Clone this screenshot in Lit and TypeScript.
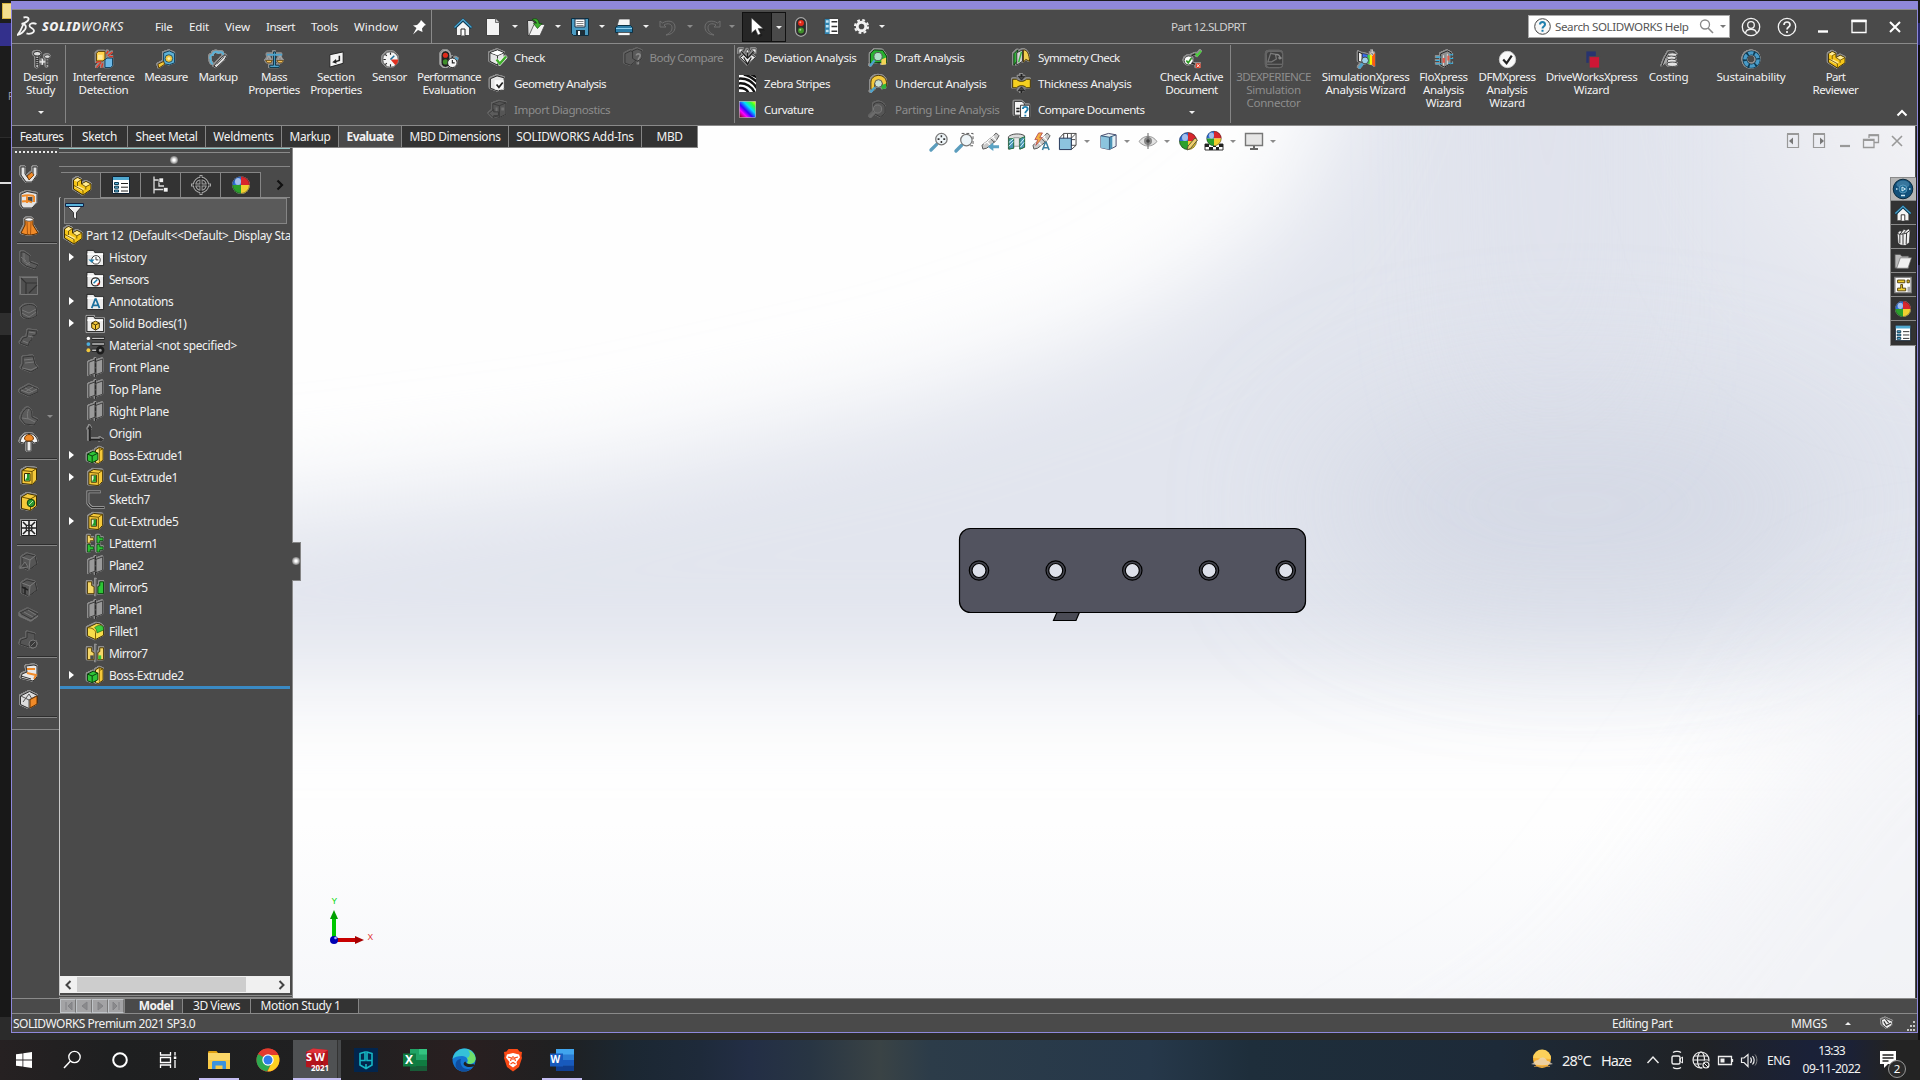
import { LitElement, html, svg, css, nothing } from "lit";
import type { SVGTemplateResult } from "lit";
import { customElement } from "lit/decorators.js";

const partBody = svg`<path d="M1.500 4 5.500 1.500 9.500 3.500V8l4.500-2.500 5 2.500v5.500l-8 5.500-9.500-6z" fill="#f5c518" stroke="#3d2d00"/><path d="m2 4.300 3.500-2.200L9 3.800 5.500 6zM9.500 8.300 14 6l4.300 2.200-4.500 2.600zM2.500 11l3-1.500 7 3.500-3 2z" fill="#ffeb94"/><path d="M5.500 6v4M5.500 6l4-2.300M9.500 8l4.300 2.800v2.700M13.800 10.800l4.700-2.500M11 19v-4.500l-9-5" fill="none" stroke="#6b5000" stroke-width=".9"/>`;
const listPanel = svg`<path d="M1.500 1.500h17v17h-17z" fill="#fff" stroke="#123"/><path d="M2 2h16v3H2z" fill="#4fa8d0"/><path d="M3.500 7.500h4v2h-4zM3.500 11.200h4v2h-4zM3.500 15h4v2h-4z" fill="#5ab4dc" stroke="#0d3a52"/><path d="M10 8.500h7M10 12.200h7M10 16h7" stroke="#222"/>`;
const ball = svg`<circle cx="10" cy="10" r="8.800" fill="#fff"/><path d="M10 10V1.200A8.800 8.800 0 0 0 1.200 10z" fill="#2f6fd6"/><path d="M10 10h8.800A8.800 8.800 0 0 0 10 1.200z" fill="#d8262c"/><path d="M10 10v8.800A8.800 8.800 0 0 1 1.200 10z" fill="#2ca02c"/><path d="M10 10v8.800A8.800 8.800 0 0 0 18.800 10z" fill="#f0cf30"/><circle cx="10" cy="10" r="8.500" fill="none" stroke="#222" stroke-opacity=".5"/><ellipse cx="7" cy="6.500" rx="3" ry="3.500" fill="#fff" opacity=".55"/>`;
const home = svg`<path d="M3.500 10 10 4l6.500 6v8.500h-13z" fill="#f4f4f4" stroke="#333" stroke-width=".8"/><path d="M8 18.500V12h4v6.500" fill="#fff" stroke="#222"/><path d="M1.500 11 10 3l8.500 8" fill="none" stroke="#0d3b54" stroke-width="3"/><path d="M1.500 10.500 10 2.500l8.500 8" fill="none" stroke="#4da3cc" stroke-width="1.400"/>`;
const folder = svg`<path d="M1 2.500h7l1.500 2.500h9v13.500H1z" fill="#ececec" stroke="#222"/><path d="M1.500 6.500h16.500" stroke="#fff" stroke-width="1.800"/>`;
const plane = svg`<path d="m3 4.500 6.500-2.500v14L3 18.500zM10.500 3.500 17.500 1v14l-7 2.500z" fill="#9a9a9a" stroke="#2e2e2e" stroke-width=".9"/><path d="M10 0v20" stroke="#2c2c2c" stroke-width="1.200" stroke-dasharray="4 1.500"/>`;
const extrude = svg`<path d="m10 4 4-2.500 4 1.500v12l-5 3.500-3-1z" fill="#f5c93a" stroke="#3d2d00"/><path d="m11 4.500 3-2v13l-3 2z" fill="#ffe58a"/><path d="M14 1.500v15M14.500 4.500l3.500-1.500" stroke="#7a5a00" fill="none"/><path d="m1.500 8.500 6-3 5 2v7l-6 3-5-2z" fill="#2fc437" stroke="#063b0a"/><path d="m1.500 8.500 5 2v7M6.500 10.500l6-3" fill="none" stroke="#063b0a"/>`;
const cut = svg`<path d="m3 4.500 5-3 9.500 1V14l-4 4.500-10.500-1z" fill="#f5c93a" stroke="#3d2d00"/><path d="m3 4.500 10 1 4.500-3M13 5.500v12.500" fill="none" stroke="#6b5000"/><path d="M5.500 7.500h5.500v7.500H5.500z" fill="#e8f7d0" stroke="#3d2d00"/><path d="M10.500 8v6.500H6l2-3V8z" fill="#1f9a2a"/>`;
const mirror = svg`<path d="M1.500 4v12.500h7V9L6 8V4z" fill="#f5d768" stroke="#4a3500"/><path d="M10 1v18" stroke="#ddd"/><path d="M10.500 1v18" stroke="#222"/>`;
const bolt = svg`<ellipse cx="5.500" cy="4" rx="4" ry="2.500" fill="#ddd" stroke="#222"/><path d="M4 6.500h3V18L5.500 19 4 18z" fill="#bbb" stroke="#222" stroke-width=".8"/><path d="M4 9h3M4 11h3M4 13h3M4 15h3" stroke="#222"/>`;
const cube = svg`<path d="m2 5 8-3 7 3v9l-7 4-8-4z" fill="#e6e6e6" stroke="#222"/><path d="m2 5 8 3 7-3M10 8v10" fill="none" stroke="#333"/><path d="m3 5 7-2.500 6 2.500-6 2.500z" fill="#fff"/>`;
const lens = svg`<path d="m1 19 6-6" stroke="#5b9dbd" stroke-width="3.500" stroke-linecap="round"/><circle cx="12" cy="7.500" r="6" fill="#eef5f8" stroke="#777" stroke-width="1.300"/>`;
const spyglass = svg`<path d="m1 14 11-9 4-4 3 3-3 5-10 8-4 1z" fill="#c9c9c9" stroke="#555"/><path d="m6 10 4 4M12 5l4 4M3 13l11-9" stroke="#fff" stroke-width="1.200"/><path d="m10 7 4 4" stroke="#555"/>`;
const dimCube = svg`<path d="m3 5 5-3 8 2 2 8-8 6-7-3z" fill="#555" stroke="#333"/><path d="m3 5 8 3 5-4M11 8l-1 10" fill="none" stroke="#7d7d7d"/>`;
const curl = svg`<path d="M2 4v6h6L6 8c4-2.500 8-1 8 2.500S12 16 8 18c6-.500 9-3.500 9-8C17 4 10 2.500 4.500 6z" fill="#4b4b4b" stroke="#6f6f6f"/>`;

const ICONS: Record<string, SVGTemplateResult> = {
  home, part: partBody, list: listPanel, ball, plane, extrude, cut,
  newdoc: svg`<path d="M3.500 1.500h9l4 4V18.500h-13z" fill="#f3f3f3" stroke="#2a2a2a" stroke-width=".8"/><path d="M12.500 1.500v4H16.500" fill="#ccc" stroke="#555" stroke-width=".8"/>`,
  open: svg`<path d="M1.500 3.500h5l1.500 2h5v13h-11z" fill="#ddd" stroke="#333"/><path d="m3 18.500 5-11h11l-5 11z" fill="#f3f3f3" stroke="#444" stroke-width=".8"/><path d="M6 2.500c4-2 7 0 7 4h3l-4.500 5L7.500 6.500h3c0-2-2-3-4.500-4z" fill="#3db02f" stroke="#0e4d08" stroke-width=".7"/>`,
  save: svg`<path d="M1.500 1.500h17v17h-15l-2-2z" fill="#4b9cc4" stroke="#0c2f42"/><path d="M5 2h10v8H5z" fill="#fff" stroke="#234"/><path d="M6.500 4.500h7M6.500 6.500h7M6.500 8.500h7" stroke="#777" stroke-width=".9"/><path d="M6 13h9v5.500H6z" fill="#1d2f39"/><path d="M8 14h2v4H8z" fill="#fff"/>`,
  print: svg`<path d="M5 2h11v7H3z" fill="#f4f4f4" stroke="#444" stroke-width=".7"/><path d="M1.500 10.500 4 8.500h12.500l2 2v5h-17z" fill="#2d7ca6" stroke="#0a3145"/><path d="M2 11.500h16" stroke="#8fd0ee"/><path d="M4 15.500h12v3H4z" fill="#f6f6f6" stroke="#444" stroke-width=".7"/>`,
  undo: curl,
  redo: svg`<g transform="matrix(-1 0 0 1 20 0)">${curl}</g>`,
  cursor: svg`<path d="M6 3v15l4-3.500 2.500 5.500 3-1.300L13 13.500h5z" fill="#1c1c1c"/><path d="M4.500 1v15L8.500 12.500l2.500 5.500 2.500-1.200L11 11.500h5z" fill="#fff" stroke="#444" stroke-width=".5"/>`,
  lights: svg`<rect x="4.500" y=".7" width="11" height="18.600" rx="5.500" fill="#2c2c2c" stroke="#aaa" stroke-width="1.200"/><circle cx="10" cy="6" r="3" fill="#e02a1a"/><circle cx="9.300" cy="5.200" r="1" fill="#ff9a8a"/><circle cx="10" cy="13.500" r="3" fill="#3f8f2a"/><circle cx="9.300" cy="12.700" r="1" fill="#a0d890"/>`,
  props: svg`<path d="M2.500 1.500h15v17h-15z" fill="#fff" stroke="#333"/><path d="M3 2h5v16H3z" fill="#2f83b0"/><path d="M4 3.500h3v2.500H4zM4 8.500h3V11H4zM4 13.500h3V16H4z" fill="#bfe4f5"/><path d="M10 5h6M10 10h6M10 15h6" stroke="#333" stroke-width="1.500"/>`,
  gear: svg`<circle cx="10" cy="10" r="5" fill="none" stroke="#f2f2f2" stroke-width="3.400"/><circle cx="10" cy="10" r="7.700" fill="none" stroke="#f2f2f2" stroke-width="2.400" stroke-dasharray="3.200 2.848"/>`,
  pin: svg`<path d="m12 3 5 5-1.500.5-2.500 3 .5 3.500L9 13l-5 4.500L7.500 11 4 8.500l4-.5 3-3z" fill="#fff"/>`,
  bolts: svg`${bolt}<g transform="translate(12 4) scale(.75)">${bolt}</g><path d="M8 12.500h6M11 9.500v6" stroke="#eee" stroke-width="1.300"/>`,
  interference: svg`<path d="m1.500 3.500 2-2h7v8l-2 2h-7z" fill="#ffd24a" stroke="#5a3c00"/><path d="M3 5h5v5H3z" fill="#ffe99a"/><path d="m10.500 10.500 2-2h6v8l-2 2h-6z" fill="#6cb8e6" stroke="#0c3c5a"/><path d="M14 1 12 4M18.500 2l-5 4M19 7h-4M1 13l5-1M1.500 18.500 6.500 13M7 18.500 8 14" stroke="#e6301c" stroke-width="1.400"/>`,
  measure: svg`<path d="m7 3 6-2 5.500 2.500v10L13 15.500l-6-1z" fill="#5db1d6" stroke="#0c3c5a"/><circle cx="12.500" cy="9" r="4" fill="#f3c93c" stroke="#1d4c66"/><circle cx="12.500" cy="9" r="1.500" fill="#fff1b0"/><path d="m1 15 6-3 1 3-6 4z" fill="#f3c93c" stroke="#5a3c00"/>`,
  markup: svg`<path d="M2 10c-2-3 0-5 2-5 0-3 4-4 6-2 3-2 5 0 5 2M2 10c-1 3 1 4 2 5" fill="none" stroke="#5db1d6" stroke-width="2"/><path d="m5 17 8-9 4-3 1.500 1.500-2 4-8.500 8z" fill="#ddd" stroke="#222"/><path d="m8 15 8-8" stroke="#555"/>`,
  scale: svg`<path d="M9 2h2v14h4v2.500H5V16h4z" fill="#4ea3cc" stroke="#0a3145"/><path d="M2 5h16" stroke="#4ea3cc" stroke-width="2"/><path d="M4 6 1.500 11h5zM16 6l-2.500 5h5z" fill="none" stroke="#aaa"/><path d="M.7 11h7L6 13.500H2.500zM12.500 11h7l-1.700 2.500h-3.500z" fill="#f3c060" stroke="#5a3c00" stroke-width=".8"/>`,
  section: svg`<path d="m3 5 14-3v12l-14 4z" fill="#f4f4f4" stroke="#222"/><path d="M13 6v5l-5 1.500" fill="none" stroke="#222" stroke-width="1.600"/><path d="M9.500 9.500 5.500 13l4.500 1.500z" fill="#222"/>`,
  sensor: svg`<circle cx="10" cy="10" r="8.200" fill="#f4f4f4" stroke="#555"/><path d="M10 10h8.200a8.200 8.200 0 0 1-3 6z" fill="#e03020"/><path d="m10 10 4-4" stroke="#1e6e9a" stroke-width="1.600"/><path d="M10 2.500v2.500M4.500 4.500l1.600 1.700M2.500 10H5M4.500 15.500l1.600-1.700M10 17.500V15" stroke="#222" stroke-width="1.200"/>`,
  perf: svg`<rect x="1" y=".7" width="9.500" height="17.600" rx="4.700" fill="#222" stroke="#ccc"/><circle cx="5.700" cy="5.500" r="2.700" fill="#e02a1a"/><circle cx="5.700" cy="12.500" r="2.700" fill="#3f8f2a"/><circle cx="13" cy="13.500" r="5" fill="#f4f4f4" stroke="#222"/><path d="M13 10.500v3h2.500M13 6.500v2" stroke="#222" stroke-width="1.200" fill="none"/><path d="m16 8 3 2" stroke="#4ea3cc" stroke-width="2"/>`,
  check: svg`${cube}<path d="m9 12 3.500 4L19 9" fill="none" stroke="#fff" stroke-width="4"/><path d="m9 12 3.500 4.500L19 9" fill="none" stroke="#3fae2a" stroke-width="2.600"/>`,
  geom: svg`<path d="m2.500 5 7-3 7.500 2v11l-6 3-8.500-3z" fill="#e6e6e6" stroke="#222"/><path d="M7 6.500h9.500v10H7z" fill="#fafafa"/><path d="m9 11 2.500 3 4-5" fill="none" stroke="#222" stroke-width="1.800"/>`,
  cubeoff: svg`<path d="m5 4 7-2.500 7 1.500v12l-7 3.500-7-2z" fill="#555" stroke="#3a3a3a"/><path d="m5 4 7 2 7-3M12 6v12" fill="none" stroke="#3a3a3a"/><path d="M8 8h2v4H8zM14 8h3v3h-3z" fill="#707070"/><path d="m1 14 5-4v2.500h5v4H6V19z" fill="#5c5c5c" stroke="#3a3a3a"/>`,
  compare: svg`<path d="m1 6 6-3 5 2v9l-5 4-6-2z" fill="#5a5a5a" stroke="#363636"/><path d="m9 3 5-2 5 2v8l-5 3-5-3z" fill="#5a5a5a" stroke="#363636"/><path d="M13 8c0-2.500 4-2.500 4 0s-2 2-2 4.500M15 15v2" fill="none" stroke="#8a8a8a" stroke-width="1.700"/>`,
  deviation: svg`<path d="m2.500 10 7.500 7.500L18.500 10l-4-3-4.500 4-4-4z" fill="#e9e9e9" stroke="#222"/><path d="m10 11-7-8M10 11l8-9M10 11V4M6 10l4 7 4-7" fill="none" stroke="#222" stroke-width="1.300"/><path d="M1 6V1h5zM19 6V1h-5zM8 5l2-4 2 4z" fill="#eee" stroke="#222" stroke-width=".6"/>`,
  zebra: svg`<svg x="1" y="1" width="18" height="18" viewBox="1 1 18 18" overflow="hidden"><path d="M1 1h18v18H1z" fill="#fff"/><g fill="none" stroke="#111" stroke-width="2.600"><path d="M0 15c6-1 10 2 11 5M0 10c8-1 15 3 18 10.500M0 5c9-1 16 4 20 10M6 .5c5 .5 9 3.500 14 8M13 0l8 4"/></g></svg>`,
  curvature: svg`<rect x="1.500" y="1.500" width="17" height="17" fill="url(#rb)" stroke="#ddd" stroke-width=".5"/>`,
  draft: svg`<path d="M1.500 16V6l4-4 9 .5 4 6V16l-5-1z" fill="#27b52f" stroke="#063b0a"/><path d="m13 12 5-2v7l-5 1z" fill="#f3d355"/><path d="m1 19 5-6" stroke="#4ea3cc" stroke-width="2.500"/><circle cx="9.500" cy="9" r="4.300" fill="#bfe6d8" fill-opacity=".9" stroke="#555"/>`,
  undercut: svg`<path d="M2 16V9c0-5 4-7.500 8-7.500 5 0 8 3 8.500 7.500V13H14v-3c-1-3-6-4-8 0v7z" fill="#f3c93c" stroke="#4a3500"/><path d="m12 12 6-2v5l-4 1z" fill="#2fb53a"/><path d="m1.500 19 5-5" stroke="#4ea3cc" stroke-width="2.500"/><circle cx="10" cy="10" r="4" fill="#cfe9dc" fill-opacity=".9" stroke="#555"/>`,
  parting: svg`<path d="M5 4c4-3 10-2 12 3v7l-5 4-7-4z" fill="#555" stroke="#383838"/><path d="m1 18 5-5" stroke="#6c6c6c" stroke-width="2.500"/><circle cx="9" cy="9.500" r="4.300" fill="#5f5f5f" stroke="#7a7a7a"/>`,
  symmetry: svg`<path d="m2 6 4-4v11l-4 5z" fill="#36b23d" stroke="#063b0a"/><path d="m5 5 6-3v12l-6 4z" fill="#d7d7d7" stroke="#333"/><path d="M7 15 10 4" stroke="#36b23d" stroke-width="1.500"/><path d="M12 2c4 0 6 4 6.500 12l-4-2-2.500 3z" fill="#f0cf50" stroke="#4a3500"/>`,
  thickness: svg`<path d="M.7 5.500h4c3 3 7.500 3 10.600 0h4v9h-4c-3-3-7.500-3-10.600 0h-4z" fill="#f5d020" stroke="#3d2d00"/><path d="M10 0v3M10 20v-3" stroke="#222" stroke-width="2"/><path d="M6.500 2.500h7l-3.500 4zM6.500 17.500h7l-3.500-4z" fill="#444" stroke="#111" stroke-width=".7"/>`,
  docs: svg`<path d="M2.500 1.500h8L13 4v12H2.500z" fill="#f5f5f5" stroke="#333"/><path d="M9 5.500h9.500v13H9z" fill="#fff" stroke="#333"/><path d="M4.500 12H8M4.500 9H8" stroke="#222" stroke-width="1.700"/><path d="M11.500 9.500c0-3 5-3 5 0 0 2-2.500 2-2.500 4.500M14 15.500v1.800" fill="none" stroke="#1e7fae" stroke-width="2"/>`,
  active: svg`<circle cx="6" cy="11" r="4.700" fill="#fff" stroke="#444"/><path d="m3.500 11 2 2.500 3.500-5" fill="none" stroke="#2c9a22" stroke-width="1.800"/><path d="m13 3.500 2 2.500 4-5" fill="none" stroke="#4ad03a" stroke-width="2"/><path d="m9 6 4-2M9 13.500l3.500 1.500" stroke="#222" stroke-width="1.500"/><path d="M13.500 14h5v5h-5z" fill="#e23a22"/><path d="m14.500 15 3 3M17.500 15l-3 3" stroke="#fff"/>`,
  threedx: svg`<rect x="1.500" y="1.500" width="17" height="17" rx="3" fill="#3f3f3f" stroke="#6c6c6c"/><path d="M2 15h16M3 12.500l3-9 5 1 1 5-5 3z" fill="none" stroke="#777" stroke-width="1.300"/><path d="M11 5c3-1 5 1 5 4l1.500-1M16 9l-2-1" fill="none" stroke="#888" stroke-width="1.600"/>`,
  simx: svg`<path d="m1.500 2 4 2v9l-4-1z" fill="#eee" stroke="#222"/><path d="m5.500 3.500 6 1.500v7l-6-1z" fill="#3a6cf0" stroke="#222" stroke-width=".6"/><path d="m11 5 3 .5v9h-3z" fill="#3fd04a"/><path d="m13.500 5 2.500-.5v11h-2.500z" fill="#fff200"/><path d="m16 4.500 3-1v14l-3-2z" fill="#ff5a10"/><path d="m2 19 4-5" stroke="#4ea3cc" stroke-width="3"/><circle cx="8.500" cy="11" r="3.600" fill="#9bd0e8" stroke="#444"/><path d="M16 0v4M14 3l2 3 2-3z" stroke="#ddd" fill="#222"/>`,
  flox: svg`<path d="m6 4 7-3 4 2v11l-7 4-4-2z" fill="#8f8f8f" stroke="#222"/><path d="M9 5.500v11M13 4v11" stroke="#ddd"/><path d="M8 8.500h2.500v5H8zM13 6h2v5h-2z" fill="#e05a4a"/><path d="M1 7.500h5M1 11h4M1 14.500h6M15 5h4M16 9h3M14 14h5" stroke="#2fb4e8" stroke-width="1.200"/>`,
  dfm: svg`<circle cx="10" cy="10" r="8.600" fill="#fafafa" stroke="#ccc"/><path d="m5.500 10 3.500 4 5.500-8" fill="none" stroke="#222" stroke-width="2.300"/>`,
  drive: svg`<path d="M3.500 1.500h10v12h-10z" fill="#28336f"/><path d="M6.500 7h11v12h-11z" fill="#cf1735" stroke="#4b4b4b"/>`,
  costing: svg`<path d="m2 17 3-8 4-7h6l-1 4" fill="#aaa" stroke="#222"/><g fill="#e2e2e2" stroke="#222" stroke-width=".8"><ellipse cx="13" cy="5" rx="5" ry="2"/><ellipse cx="12" cy="8.300" rx="5" ry="2"/><ellipse cx="12.500" cy="11.600" rx="5" ry="2"/><ellipse cx="13" cy="15" rx="5.500" ry="2.300"/></g>`,
  sustain: svg`<circle cx="10" cy="10" r="7" fill="none" stroke="#0e3a52" stroke-width="5"/><circle cx="10" cy="10" r="7" fill="none" stroke="#4a9cc8" stroke-width="3.600" stroke-dasharray="5.500 1.830"/>`,
  uturn: svg`<path d="M2 3v8l5 7h6l5-7V3h-4v7l-3 4H9l-3-4V3z" fill="#e4e4e4" stroke="#333"/><path d="m8 12 5-4 2 3-5 5z" fill="#f08a28" stroke="#5a2c00" stroke-width=".8"/><path d="M6 4v6M14 4v6" stroke="#888"/>`,
  weldcube: svg`<path d="m2 4 6-2.500 10 2v9L13 18H4l-2-3z" fill="#e4e4e4" stroke="#333"/><path d="M7.500 7h6v5h-6z" fill="#4a4a4a"/><path d="M3 6c4-1 8-1 12 0M8 5v8M15 6v6M3 11.500c4-1 7-1 10 1" stroke="#f08a28" stroke-width="2" fill="none"/>`,
  loft: svg`<path d="M6 3c2-1 6-1 8 0v6l5 8c-5 2.500-12 2.500-17 0l4-8z" fill="#f08a28" stroke="#5a2c00"/><ellipse cx="10" cy="3.500" rx="4" ry="1.700" fill="#fff" stroke="#444" stroke-width=".8"/><path d="m8 6 .5 12M12 6l-.5 12" stroke="#a85512"/>`,
  g1: svg`<path d="M2 2h3l6 4v6l8 3-3 4-9-3-5-4z" fill="#5b5b5b" stroke="#353535"/><path d="M5 3v8l6 4M2 7l5 4M11 12l-4 3" fill="none" stroke="#777"/>`,
  g2: svg`<path d="M1.500 1.500h17v17h-17z" fill="#505050" stroke="#777"/><path d="m2 2 5 5h11M7 7v11M10 17l8-8" fill="none" stroke="#333" stroke-width="1.200"/>`,
  g3: svg`<path d="M2 6c3-4 12-5 15-1l1 8c-3 4-12 5-15 1z" fill="#575757" stroke="#353535"/><path d="m3 8 7 3 7-4M3 11l7 4 7-5" fill="none" stroke="#777"/>`,
  g4: svg`<path d="m9 2 9 1-1 4-4 1v4l-2 1-2 5-8-3 3-5 4-1z" fill="#575757" stroke="#353535"/><path d="m10 4 6 1M4 13l5 2M9 8l5 1" stroke="#7a7a7a"/>`,
  g5: svg`<path d="m4 3 10-1 2 8 3 4-7 4-10-4 2-4z" fill="#575757" stroke="#353535"/><path d="m5 6 9-1M6 9l9-1M3 14l9 2 6-3" fill="none" stroke="#7a7a7a"/>`,
  g6: svg`<path d="m1 10 9-5 9 4v3l-9 4-9-4z" fill="#575757" stroke="#353535"/><path d="m2 10 8 3 8-4M6 8l8 4M14 7l-8 5" fill="none" stroke="#7a7a7a"/>`,
  g7: svg`<path d="M8 2c4 0 5 3 5 9l6 3-4 5-9-1-4-5c0-5 3-9 6-11z" fill="#5b5b5b" stroke="#353535"/><path d="m3 12 7 1 6 3M10 3c-2 3-2 6-1 10" fill="none" stroke="#7a7a7a"/>`,
  umbrella: svg`<path d="M8 9h4v10H8z" fill="#ececec" stroke="#444"/><path d="M1 10c1-5 4-8.500 9-8.500s8 3.500 9 8.500l-3.500 1-3-2h-5l-3 2z" fill="#f4f4f4" stroke="#333"/><path d="M5.500 7c0-6 9-6 9 0l-2 2h-5z" fill="#f08a28" stroke="#6b3400"/>`,
  hole: svg`<path d="m2.500 5 6-3.500 9 2v10.500l-6 4.500-9-2z" fill="#f5c93a" stroke="#3d2d00"/><path d="m2.500 5 9 2 6-3.500M11.500 7v11" fill="none" stroke="#6b5000"/><circle cx="12" cy="11" r="3.800" fill="#2a9a32" stroke="#0c3d10"/><path d="m10 13 4-4" stroke="#b5e8a8"/>`,
  expand: svg`<path d="M2.500 2.500h15v15h-15z" fill="#eee" stroke="#222"/><circle cx="10" cy="10" r="3" fill="none" stroke="#222" stroke-width="1.200"/><path d="M3 10h14M10 3v14M4 4l4 4M16 4l-4 4M4 16l4-4M16 16l-4-4" stroke="#222" stroke-width="1.600"/>`,
  g8: svg`${dimCube}<path d="m1 16 5-6 3 5z" fill="#444" stroke="#777"/>`,
  g9: svg`${dimCube}<path d="M6 9v7M3 9l6 3" stroke="#222" stroke-width="1.500"/>`,
  g10: svg`<path d="m1 9 8-4 10 5-7 5z" fill="#555" stroke="#353535"/><path d="m1 9v3l11 5 7-5M5 8l9 5M9 6l8 5" fill="none" stroke="#777"/>`,
  g11: svg`<path d="m8 2 8 2v7l-6 6-9-3 1-4 6-2z" fill="#555" stroke="#353535"/><circle cx="14" cy="14" r="4" fill="#3a3a3a" stroke="#777"/><path d="m12 16 4-4" stroke="#777"/>`,
  simplate: svg`<path d="m7 2 8-1 3 1v11l-4 4-12-3 1-4 5-2z" fill="#e8e8e8" stroke="#333"/><path d="m8 9 9 2-2 4M8 5l8 0" fill="none" stroke="#f08a28" stroke-width="1.800"/><path d="m2 12 10 3" stroke="#333"/>`,
  whitecube: svg`<path d="m1.500 6 9-4.500 8 4v8L10 18.500l-8.500-4z" fill="#ddd" stroke="#333"/><path d="m2 6 8 4 8-4.500M10 10v8M4 12l6-8 3 5" stroke="#555" fill="none"/><path d="m11 9.500 7-3.500v8l-7 4z" fill="#f08a28" stroke="#6b3400"/>`,
  tree: svg`<path d="M3 1.500v17M3 5h5M3 14.500h10M8 5v6h5" fill="none" stroke="#ddd" stroke-width="1.300"/><path d="M8 3h4.500v4.500H8zM12.500 12.500H17V17h-4.500z" fill="#f2f2f2" stroke="#222" stroke-width=".6"/>`,
  target: svg`<circle cx="10" cy="10" r="6.500" fill="none" stroke="#a8a8a8" stroke-width="3.400"/><path d="M10 0v20M0 10h20" stroke="#a8a8a8" stroke-width="3"/><circle cx="10" cy="10" r="6.500" fill="none" stroke="#222" stroke-width="1.300"/><path d="M10 1v18M1 10h18" stroke="#222" stroke-width="1.200"/>`,
  filter: svg`<path d="M1 4h17l-6.500 7.500v7l-3-2v-5z" fill="#eee" stroke="#333"/><path d="M.5 2.500h18v3H.5z" fill="#5ab4dc" stroke="#124"/>`,
  history: svg`${folder}<circle cx="10.500" cy="12.500" r="4.500" fill="#fff" stroke="#333"/><path d="M10.500 9.500v3h2.500" fill="none" stroke="#333"/><path d="m2.500 12 3.500 3.500 3-3.500z" fill="#1e7fae"/>`,
  sensors: svg`${folder}<circle cx="10" cy="12.500" r="4.300" fill="#fff" stroke="#222" stroke-width="1.300"/><path d="m8 14 4-4" stroke="#1e7fae" stroke-width="1.600"/><path d="m11 15.500 3-3v3z" fill="#e03020"/>`,
  annot: svg`${folder}<path d="m6 17 3.700-9.500h.8L14.200 17M7.500 14h5" fill="none" stroke="#1b6f9c" stroke-width="1.800"/>`,
  bodies: svg`<path d="M0 1.500h9v2.500h10.500v15.500H0z" fill="#4b4b4b" stroke="#aaa"/>${folder}<path d="m6 9.500 4-2 4 2v5l-4 2.500-4-2.500z" fill="#f5c93a" stroke="#3d2d00"/><path d="m6 9.500 4 2 4-2M10 11.500v5" fill="none" stroke="#3d2d00"/>`,
  material: svg`<circle cx="2.500" cy="2.500" r="1.800" fill="#fff"/><circle cx="2.500" cy="8.500" r="2" fill="#4db0e0"/><circle cx="2.500" cy="15" r="2" fill="#f3c93c"/><path d="M6 2.500h13.500M6 8.500h13.500M6 15h6" stroke="#222" stroke-width="3.400"/><path d="M6.500 2.500H19M6.500 8.500H19M6.500 15h6" stroke="#c0c0c0" stroke-width="1.500"/><circle cx="15" cy="15" r="3" fill="#999" stroke="#1c1c1c" stroke-width="2.800"/>`,
  origin: svg`<path d="M4 18V4M4 16.500h12" stroke="#222" stroke-width="2.200" fill="none"/><path d="M1.500 5.500 4 1l2.500 4.500zM14.500 14l4.500 2.500-4.500 2.500z" fill="#333"/>`,
  sketch: svg`<path d="M15.500 2H2v12c1.500 2 2 3 4.500 4.500h13" fill="none" stroke="#aaa" stroke-width="3"/><path d="M15 2H2v12c1.500 2 2 3 4.500 4.500H19" fill="none" stroke="#2e2e2e" stroke-width="1.200"/>`,
  pattern: svg`<path d="M1.500 1.500h3V4h3.500v3H4.500v2.500h-3z" fill="#f5d768" stroke="#4a3500" stroke-width=".8"/><g fill="#2fc437" stroke="#063b0a" stroke-width=".8"><path d="M11.500 1.500h3V4h3.500v3h-3.500v2.500h-3zM1.500 11h3v2.500h3.500v3H4.500V19h-3zM11.500 11h3v2.500h3.500v3h-3.500V19h-3z"/></g>`,
  mirror: svg`${mirror}<path d="M18.500 4v12.500h-6V9l2-1V4z" fill="#2fc437" stroke="#063b0a"/>`,
  mirror2: svg`${mirror}<path d="M18.500 4v12.500h-6V9l2-1V4z" fill="#f5d768" stroke="#4a3500"/><path d="M4.500 12h3.500v4H4.500z" fill="#4b4b4b"/><path d="M13 12h3v4h-3z" fill="#2fc437"/>`,
  fillet: svg`<path d="M1.500 6 11 1.500c4 0 7 2 7.500 5V14L10 18.500l-8.500-4z" fill="#f7dc4a" stroke="#3d2d00"/><path d="M10 18.500V11C10 8 6 6 1.500 6" fill="none" stroke="#7a5a00"/><path d="M9 6c2-2 5-3.500 9-1.500l.5 4-7 3C11.500 8.500 10.500 7 9 6z" fill="#3ccb40" stroke="#0b4a10" stroke-width=".6"/>`,
  zoomfit: svg`${lens}<path d="M12 3.500v2M12 9.500v2M8 7.500h2M14 7.500h2" stroke="#333" stroke-width="1.600"/>`,
  zoomarea: svg`<path d="M7 1.500h12v13H14" fill="none" stroke="#555" stroke-dasharray="3 2"/><g transform="translate(0 1)">${lens}</g>`,
  prev: svg`${spyglass}<path d="M19 14h-6v-3l-6 4.500 6 4.500v-3h6z" fill="#5ba3c4"/>`,
  sect: svg`<path d="M1.500 5c3-3.500 13-4 17-1v12l-5 2V8H7v9l-5.500 1z" fill="#ddd" stroke="#444"/><path d="M7 6h6v9H7z" fill="#e8e8e8" stroke="#777" stroke-width=".7"/><path d="M2 7h5v10l-5 1zM13.500 7l5-2v11l-5 2z" fill="#4b93b6" stroke="#274"/><path d="m2 11 5-4M2 15l5-5M14 12l4-5M14 16l4-5" stroke="#dff"/>`,
  dyn: svg`${spyglass}<path d="M7 1 3 8h3l-2 6 7-8H8l3-5z" fill="#f5b040" stroke="#b55"/><path d="m11 19 3-8h1l3 8M12 16.500h5" fill="none" stroke="#3a7f9f" stroke-width="1.600"/>`,
  orient: svg`<path d="M6 1.500h13V14H6zM1.500 6.500 6 1.500M14 6.500l5-5M14 18.500l5-4.500M10 2v13M6 8h12M14 2v12" fill="none" stroke="#444"/><path d="M1.500 6.500h12.500v12H1.500z" fill="#8cc4de" stroke="#235"/>`,
  display: svg`<path d="m2 4 8-2.500 8 1.500v12L11 18.500l-9-2z" fill="#e4f0f5" stroke="#446"/><path d="m2 4 9 1.500V18.500l-9-2z" fill="#8cc4de"/><path d="m11 5.500 3-1V17l-3 1.500z" fill="#4b93b6"/><path d="m2 4 9 1.500 7-2.500M11 5.500v13" fill="none" stroke="#357"/>`,
  eye: svg`<path d="M1 10.500c5-7 13-7 18 0-5 6-13 6-18 0z" fill="#e2e2e2" stroke="#999"/><circle cx="10" cy="10" r="4" fill="#888"/><path d="M10 2v16" stroke="#666"/><circle cx="10" cy="10" r="1.800" fill="#444"/>`,
  appear: svg`${ball}<path d="m9 19 1-4 7-8 2.500 2-7 8.500z" fill="#f0cf70" stroke="#553"/>`,
  scene: svg`<path d="M1 13h18v6H1z" fill="#fff" stroke="#333"/><path d="M1 13h4v3H1zM9 13h3v3H9zM15 13h4v3h-4zM5 16h4v3H5zM12 16h3v3h-3z" fill="#222"/><g transform="translate(1.500 -1) scale(.85)">${ball}</g>`,
  monitor: svg`<path d="M1.500 2.500h17v12h-17z" fill="#e6e6e6" stroke="#777" stroke-width="1.400"/><path d="M10 15v3M6 18h8" stroke="#666" stroke-width="2"/>`,
  dockl: svg`<path d="M4.500 3.500h11v13h-11z" fill="none" stroke="#999" stroke-width="1.200"/><path d="M4 3h12" stroke="#999" stroke-width="2"/><path d="m10 6.500-4 3.500 4 3.500z" fill="#777"/>`,
  dockr: svg`<path d="M4.500 3.500h11v13h-11z" fill="none" stroke="#999" stroke-width="1.200"/><path d="M4 3h12" stroke="#999" stroke-width="2"/><path d="m11 6.500 4 3.500-4 3.500z" fill="#777"/>`,
  vmin: svg`<path d="M5 15h10" stroke="#999" stroke-width="2.200"/>`,
  restore: svg`<path d="M8 7V4h9.500v7.500H13M2.500 8.500H13v8H2.500z" fill="none" stroke="#999" stroke-width="1.300"/><path d="M2.500 9H13M8 4.300h9.500" stroke="#999" stroke-width="2"/>`,
  vclose: svg`<path d="m5 5 10 10M15 5 5 15" stroke="#999" stroke-width="1.600"/>`,
  compass: svg`<circle cx="10" cy="10" r="9.800" fill="#12507a" stroke="#0a2a3e"/><ellipse cx="10" cy="5.500" rx="6.500" ry="4" fill="#5b9cc0" opacity=".5"/><circle cx="10" cy="10" r="4" fill="#1c6a96" stroke="#8cc4e0" stroke-width=".5"/><path d="m9 8 3.500 2L9 12z" fill="none" stroke="#cfe9f5"/><path d="M3 10h1.500M16 10h1.500M8 16.500h4" stroke="#cfe9f5" stroke-width="1.500"/>`,
  books: svg`<path d="m3.500 6 3-3 2.500 1 2-2.500 2.500 1L16 1l2 1.500-1 14-4.500 3-5-.5-3-2z" fill="#f0f0f0" stroke="#222" stroke-width=".7"/><path d="M6.500 7v10M10 6.500v12M14 5.500 13.500 18M3.500 6l3 1L9 4M7 7l3-.5L13.500 2.500M11 6.500l3-1 4-3" fill="none" stroke="#333" stroke-width="1.100"/>`,
  folderopen: svg`<path d="M1 2.500h6l1.500 2h8v13.500H1z" fill="#bbb" stroke="#444"/><path d="m3 18 4-11.500h12.500l-4 11.500z" fill="#f0f0f0" stroke="#666" stroke-width=".7"/>`,
  palette: svg`<path d="M1 1.500h18v17H1z" fill="#fafafa" stroke="#888" stroke-width="1.500"/><path d="M4 4.500h8v3H4zM14.500 4.500h2.500v3h-2.500zM7.500 9.500h2v4H13v3H4v-3h3.500z" fill="#f0cf30" stroke="#4a3500"/><path d="M15 12h3v5.500h-3z" fill="#aaa"/>`,
  tag: svg`<path d="m3 6 5-2 9 4-1 5-6 4-6-5z" fill="#eee" stroke="#333"/><path d="m6 8 3 5 6-3M8 5l4 5" fill="none" stroke="#333" stroke-width="1.400"/>`,
};

const TASK: Record<string, SVGTemplateResult> = {
  win: svg`<path d="m4 6.300 6.500-.9v6.200H4zM11.300 5.300 20 4v7.600h-8.700zM4 12.400h6.500v6.200L4 17.700zM11.300 12.400H20V20l-8.700-1.300z" fill="#fff"/>`,
  search: svg`<circle cx="14.500" cy="9" r="5.700" fill="none" stroke="#fff" stroke-width="1.300"/><path d="m10.500 13-6.500 7" stroke="#fff" stroke-width="1.500"/>`,
  ring: svg`<circle cx="12" cy="12" r="6.800" fill="none" stroke="#fff" stroke-width="2"/>`,
  view: svg`<path d="M4.500 4v3h10V4M4.500 20v-3h10v3M4.500 9.500h10v5h-10z" fill="none" stroke="#fff" stroke-width="1.300"/><path d="M19 4v3.500M19 12v8" stroke="#fff" stroke-width="1.300"/><path d="M17.800 8.500h2.500V11h-2.500z" fill="#fff"/>`,
  explorer: svg`<path d="M1 4.500c0-1 .5-1.500 1.500-1.500h7l1.500 2H1z" fill="#e0a010"/><path d="M1 5h22v16H1z" fill="#fbd667"/><path d="M1 12h22v9H1z" fill="#f8c945"/><path d="M5 21v-6.500c0-1 .7-1.500 1.500-1.500h11c1 0 1.500.5 1.500 1.500V21h-3.500v-3.500h-7V21z" fill="#3c92dd"/>`,
  chrome: svg`<circle cx="12" cy="12" r="11.500" fill="#e33b2e"/><path d="M12 12 2.200 6A11.500 11.500 0 0 0 11 23.500l5-9z" fill="#2da94f"/><path d="M12 12h5l-5.500 11.500A11.500 11.500 0 0 0 22.300 7H12z" fill="#fdd022"/><path d="M2.200 6A11.500 11.500 0 0 1 22.300 7H12z" fill="#e33b2e"/><circle cx="12" cy="12" r="5.700" fill="#fff"/><circle cx="12" cy="12" r="4.500" fill="#2f7de9"/>`,
  teal: svg`<path d="M0 0h24v24H0z" fill="#02254d"/><path d="M6 5.500 11 4v8.500H6zM18 5.500 13 4v8.500h5zM6 12.500V17l6 3.500 6-3.500v-4.500M12 16v4" fill="none" stroke="#16b6c4" stroke-width="1.600"/>`,
  excel: svg`<path d="M7 1h17v22H7z" fill="#21a366"/><path d="M16 1h8v5.500h-8z" fill="#33c481"/><path d="M7 12h17v6H7z" fill="#107c41"/><path d="M7 18h17v5H7z" fill="#185c37"/><path d="M0 5.500h13v13H0z" fill="#107c41"/>`,
  edge: svg`<circle cx="12" cy="12" r="11.500" fill="#1476d2"/><path d="M.6 11C2 4 7 .5 12.500.5 20 .5 24 6 23.500 11c-.4 4-5 6-8.500 4 2-3 0-7-5-7-4 0-8 1-9.400 3z" fill="#35c1d8"/><path d="M16 2c5 2 8 6 7.500 9.500-.5 4-5.500 5.500-8.500 3.500 1.500-2 1-4 0-5 3-1 4-5 1-8z" fill="#6fe06a"/><path d="M9 11c-2 5 2 11 8 10 2 0 3-1 4.500-2.500-4 5.500-12 6.500-17 2C2 15 5 11 9 11z" fill="#0f4ea0"/><path d="M13.500 13.500c0 2 3 3.500 8 2.500l1 2c-4 2-9 1-10.500-1-1-1.500 0-3 1.500-3.500z" fill="#20201f"/>`,
  brave: svg`<path d="M7.500 1h9l2 2.500L21 4l-.5 4 .5 2-3 9-6 4.500L6 19l-3-9 .5-2L3 4l2.500-.5z" fill="#fb4a16"/><path d="M6 6.500 12 5l6 1.500 1 3-3.500 4.500.5 2.500-4 3-4-3 .5-2.500L5 9.500z" fill="#fff"/><path d="m7 9 3.500 1L9.500 13M17 9l-3.500 1 1 3M9.500 16l2.500-1.500 2.500 1.500M12 8v4" fill="none" stroke="#fb4a16" stroke-width="1.200"/>`,
  word: svg`<path d="M6 1h18v22H6z" fill="#2b7cd3"/><path d="M6 1h18v5.500H6z" fill="#41a5ee"/><path d="M6 12h18v5.500H6z" fill="#185abd"/><path d="M6 17.500h18V23H6z" fill="#103f91"/><path d="M0 5.500h13v13H0z" fill="#185abd"/>`,
  sw: svg`<path d="m1 4 7-3.500L23 2v15l-6 4-16-2z" fill="#b3141c"/><path d="m1 4 7-3.500L23 2l-6 4z" fill="#e0333b"/><path d="M17 6v15" stroke="#7c0a10"/>`,
  sun: svg`<circle cx="12" cy="11" r="9" fill="#f9b233"/><path d="M3 10a9 9 0 0 1 18 1z" fill="#fcd05a"/><path d="M1 16c4-1 3-4 7-4 3-4 8-3 9 1 3 0 3 2 6 3-5 1.500-17 1.500-22 0z" fill="#ead9c4" opacity=".75"/><path d="M4 18.500h16" stroke="#cf9a50" opacity=".7"/>`,
  chev: svg`<path d="m6.500 15 5.500-6 5.500 6" fill="none" stroke="#eee" stroke-width="1.400"/>`,
  meet: svg`<path d="M8 4.500c2-1.500 6-1.500 8 0M8 19.500c2 1.500 6 1.500 8 0" fill="none" stroke="#eee" stroke-width="1.300"/><rect x="7" y="8" width="8" height="8" rx="1.500" fill="none" stroke="#eee" stroke-width="1.400"/><path d="m15 11 2.500-2v6L15 13z" fill="none" stroke="#eee"/>`,
  globe: svg`<g fill="none" stroke="#eee" stroke-width="1.200"><circle cx="12" cy="12" r="8"/><ellipse cx="12" cy="12" rx="3.500" ry="8"/><path d="M4 12h16M5 8h14M5 16h14"/></g><circle cx="17" cy="17" r="4.500" fill="#222"/><circle cx="17" cy="17" r="3" fill="none" stroke="#eee" stroke-width="1.200"/><path d="m15 15 4 4" stroke="#eee"/>`,
  battery: svg`<path d="M5.500 8.500h13v8h-13zM19.500 11v3" fill="none" stroke="#eee" stroke-width="1.300"/><path d="M7.500 10.500h4v4h-4z" fill="#eee"/>`,
  volume: svg`<path d="M4.500 10v4.500H7l4 4v-12L7 10z" fill="none" stroke="#eee" stroke-width="1.200"/><path d="M13.500 9.500c1 1.500 1 4 0 5.500M15.500 8c2 2.500 2 6 0 8.500" fill="none" stroke="#eee" stroke-width="1.200"/><path d="M18 6.500c2.500 3 2.500 8 0 11" fill="none" stroke="#888"/>`,
  notif: svg`<path d="M4 3h16v13h-8l-4 4v-4H4z" fill="#fff"/><path d="M6.500 7h11M6.500 10h11M6.500 13h6" stroke="#222" stroke-width="1.300"/>`,
};

const ic = (n: string, cls = "", size = 20) =>
  html`<svg class="ic ${cls}" width=${size} height=${size} viewBox="0 0 20 20">${ICONS[n]}</svg>`;
const tk = (n: string) => html`<svg class="ic" width="24" height="24" viewBox="0 0 24 24">${TASK[n]}</svg>`;
const t = (s: string, w: number) => html`<span class="t" data-w=${w}>${s}</span>`;
const cell = (w: number, c: unknown = nothing, cls = "") =>
  html`<div class="cell ${cls}" style="width:${w}px">${c}</div>`;
const arrow = (cls = "") => html`<i class="arrow ${cls}"></i>`;

type Line = [string, number];
const big = (w: number, icon: string, lines: Line[], opts: { off?: boolean; drop?: boolean } = {}) => html`
  <div class="big ${opts.off ? "off" : ""}" style="width:${w}px">
    ${ic(icon, ["drive", "dfm", "section"].includes(icon) ? "" : "halo", 19)}
    <div class="lines">${lines.map(([s, lw]) => html`<div>${t(s, lw)}</div>`)}</div>
    ${opts.drop ? arrow("below") : nothing}
  </div>`;
const col = (w: number, rows: [string, string, number, boolean?][]) => html`
  <div class="col" style="width:${w}px">
    ${rows.map(([i, s, lw, off]) => html`<div class="crow ${off ? "off" : ""}">${ic(i, i === "zebra" || i === "curvature" ? "" : "halo", 19)}${t(s, lw)}</div>`)}
  </div>`;

const TREE: [string, string, number, boolean][] = [
  ["history", "History", 37.5, true], ["sensors", "Sensors", 39.5, false], ["annot", "Annotations", 64.5, true],
  ["bodies", "Solid Bodies(1)", 77.5, true], ["material", "Material <not specified>", 128, false],
  ["plane", "Front Plane", 60, false], ["plane", "Top Plane", 52, false], ["plane", "Right Plane", 60, false],
  ["origin", "Origin", 32.5, false], ["extrude", "Boss-Extrude1", 74, true], ["cut", "Cut-Extrude1", 69, true],
  ["sketch", "Sketch7", 41, false], ["cut", "Cut-Extrude5", 69.5, true], ["pattern", "LPattern1", 48.5, false],
  ["plane", "Plane2", 34.5, false], ["mirror", "Mirror5", 38.5, false], ["plane", "Plane1", 34, false],
  ["fillet", "Fillet1", 30, false], ["mirror2", "Mirror7", 38.5, false], ["extrude", "Boss-Extrude2", 74.5, true],
];
const OUTLINED = ["extrude", "cut", "fillet", "mirror", "mirror2", "pattern", "origin", "plane"];
const SIDE = ["uturn", "weldcube", "loft", "|", "g1", "g2", "g3", "g4", "g5", "g6", "g7", "umbrella", "|",
  "cut", "hole", "expand", "|", "g8", "g9", "g10", "g11", "|", "simplate", "whitecube", "|"];
const TABS: [string, number, number][] = [
  ["Features", 60, 43.5], ["Sketch", 56, 35], ["Sheet Metal", 78, 62], ["Weldments", 76, 60.5], ["Markup", 57, 41],
  ["Evaluate", 63, 47], ["MBD Dimensions", 107, 91], ["SOLIDWORKS Add-Ins", 133, 117.5], ["MBD", 56, 26],
];
const HOLES = [979, 1055.7, 1132.3, 1209, 1285.7];

@customElement("app-root")
export class AppRoot extends LitElement {
  static styles = css`
    :host { display: block; width: 1920px; height: 1080px; overflow: hidden; background: #1a1a1a; position: relative;
      font: 11.6px/13px "Noto Sans", "Open Sans", sans-serif; color: #f2f2f2; white-space: nowrap; }
    * { box-sizing: border-box; }
    .ic { display: block; flex: none; overflow: visible; }
    .halo { filter: drop-shadow(.7px 0 0 #8f8f8f) drop-shadow(-.7px 0 0 #8f8f8f) drop-shadow(0 .7px 0 #8f8f8f) drop-shadow(0 -.7px 0 #8f8f8f); }
    .off .halo, .halo.dim { filter: drop-shadow(.7px 0 0 #646464) drop-shadow(-.7px 0 0 #646464) drop-shadow(0 .7px 0 #646464) drop-shadow(0 -.7px 0 #646464); }
    .defs { position: absolute; }
    .t { display: inline-block; white-space: pre; flex: none; }
    .cell { display: flex; align-items: center; justify-content: center; flex: none; height: 100%; }
    .cell.l { justify-content: flex-start; }
    .arrow { width: 0; height: 0; border: 3px solid transparent; border-top-color: #f0f0f0; border-bottom: 0; }
    .arrow.dim { border-top-color: #8b8b8b; }
    .arrow.up { border-top: 0; border-bottom: 3px solid #f0f0f0; }
    .desk { height: 1040px; display: flex; background: #2b2b2b; }
    .behind { width: 11px; display: flex; flex-direction: column; overflow: hidden; }
    .b0 { height: 23px; background: #1e1e1e; padding: 3px 0 0 2px; }
    .b0 i { display: block; height: 16px; background: #f6e08e; border: 1px solid #d9b640; border-right: 0; }
    .b1 { height: 23px; background: #33308c; }
    .b2 { height: 92px; background: #1c1c1c; border-bottom: 1px solid #2c2c2c; padding: 44px 0 0 8px; color: #9a9aa8; font-size: 10px; }
    .b3 { height: 46px; background: #161616; border-bottom: 2px solid #ddd; }
    .b4 { height: 129px; background: #181818; }
    .b5 { height: 22px; background: #2e2e2e; }
    .b6 { height: 682px; background: #181818; }
    .win { width: 1907px; height: 1033px; display: flex; flex-direction: column; background: #4a4a4a; border: 1px solid #8e88dc; border-top: 9px solid #8f88da; position: relative; }
    .topline { height: 1px; background: #1c1c1c; position: absolute; left: -12px; top: -9px; width: 1920px; }
    .title { height: 35px; display: flex; flex: none; border-top: 1px solid #8a8a8a; border-bottom: 1px solid #8a8a8a; }
    .logo { font-style: italic; font-size: 12.5px; gap: 5px; }
    .logo b { font-weight: 800; }
    .vsep { width: 1px; background: #8a8a8a; flex: none; }
    .sel { height: 30px; margin-top: 2px; display: flex; border: 1px solid #111; background: #4a4a4a; width: 44px; flex: none; }
    .sel .a { width: 29px; background: #262626; border-right: 1px solid #111; display: flex; align-items: center; justify-content: center; }
    .sel .b { flex: 1; display: flex; align-items: center; justify-content: center; }
    .fname { color: #d2d2d2; }
    .search { width: 202px; height: 23px; margin-top: 5px; background: #fff; border: 1px solid #aaa; display: flex; align-items: center; color: #555; padding-left: 5px; flex: none; }
    .search .t { margin-left: 4px; }
    .search .mag { margin-left: 10px; }
    .search .arrow { margin-left: 6px; border-top-color: #777; }
    .rib { height: 82px; display: flex; border-bottom: 1px solid #8a8a8a; flex: none; position: relative; }
    .rsep { width: 1px; height: 78px; margin-top: 1px; background: #858585; flex: none; }
    .big { display: flex; flex-direction: column; align-items: center; padding-top: 6px; flex: none; position: relative; }
    .big > svg { margin-left: 1px; }
    .lines { margin-top: 1px; text-align: center; display: flex; flex-direction: column; align-items: center; }
    .lines > div { height: 13px; }
    .big .below { position: absolute; top: 67px; left: calc(50% - 3px); }
    .off { color: #8d8d8d; }
    .col { display: flex; flex-direction: column; flex: none; }
    .crow { height: 26px; display: flex; align-items: center; gap: 7px; }
    .ribup { position: absolute; right: 9px; top: 65px; }
    .body { height: 872px; display: flex; position: relative; flex: none; }
    .tabs { position: absolute; left: 0; top: 0; height: 22px; display: flex; z-index: 2; }
    .tab { background: #333; border-right: 1px solid #858585; border-bottom: 1px solid #858585; display: flex; align-items: center; justify-content: center; font-size: 11.9px; }
    .tab.on { background: #4a4a4a; font-weight: 700; }
    .side { width: 47px; padding-top: 25px; display: flex; flex-direction: column; flex: none; }
    .grip { margin-left: 3px; width: 43px; height: 2px; background: repeating-linear-gradient(90deg, #e8e8e8 0 2px, transparent 2px 4px); margin-bottom: 8px; flex: none; }
    .srow { height: 26px; padding-left: 7px; display: flex; align-items: center; gap: 8px; flex: none; }
    .sline { height: 0; margin: 3px 0 3px 5px; width: 40px; border-top: 1px solid #2e2e2e; border-bottom: 1px solid #858585; flex: none; box-sizing: content-box; }
    .sfull { height: 1px; background: #858585; margin-top: 8px; flex: none; }
    .mgr { width: 233px; padding-top: 22px; display: flex; flex-direction: column; flex: none; }
    .split { height: 5px; border-top: 1px solid #9cc; border-bottom: 1px solid #8a8a8a; flex: none; margin-right: 2px; }
    .dot { width: 8px; height: 8px; border-radius: 4px; background: radial-gradient(#fff 0 1px, #aaa 3px, #777 4px); flex: none; }
    .dotrow { height: 14px; display: flex; justify-content: center; align-items: center; border-bottom: 1px solid #858585; padding-right: 1px; flex: none; margin: 0 2px 0 0; }
    .mtabs { height: 26px; margin: 5px 2px 0 0; display: flex; padding-left: 2px; flex: none; border-bottom: 1px solid #8a8a8a; }
    .mtab { width: 40px; background: #333; border-right: 1px solid #858585; border-top: 1px solid #858585; display: flex; align-items: center; justify-content: center; }
    .mtab.on { background: #4a4a4a; margin-bottom: -1px; height: 26px; padding-left: 2px; }
    .more { flex: 1; display: flex; align-items: center; justify-content: center; padding-left: 9px; }
    .ftree { flex: 1; border-left: 1px solid #c8c8c8; display: flex; flex-direction: column; min-height: 0; margin-right: 2px; }
    .filt { height: 26px; width: 223px; margin: 0 0 0 4px; background: #5a5a5a; border: 1px solid #858585; display: flex; align-items: center; flex: none; }
    .root { height: 22px; display: flex; align-items: center; padding-left: 3px; gap: 3px; overflow: hidden; flex: none; width: 230px; }
    .trow { height: 22px; display: flex; align-items: center; flex: none; padding-bottom: 1px; }
    .trow.first { margin-top: 1px; }
    .root, .trow { font-size: 11.9px; }
    .trow .tw { width: 26px; padding-left: 9px; flex: none; }
    .tw i { display: block; width: 0; height: 0; border: 4px solid transparent; border-left: 5px solid #fff; border-right: 0; margin-top: -2px; }
    .trow .t { margin-left: 4px; }
    .roll { height: 3px; background: #3a8ac4; margin-top: -1px; flex: none; }
    .sb { margin-top: auto; height: 17px; background: #f0f0f0; display: flex; align-items: center; flex: none; margin-bottom: 2px; }
    .sb .th { width: 169px; height: 15px; background: #cdcdcd; }
    .sb .g { width: 17px; display: flex; justify-content: center; }
    .sb .r { margin-left: auto; }
    .mline { height: 3px; border-top: 1px solid #8a8a8a; border-bottom: 1px solid #8a8a8a; flex: none; }
    .view { flex: 1; position: relative; border-left: 1px solid #8a8a8a; border-right: 1px solid #222; overflow: hidden; }
    .scene { display: block; }
    .hud { position: absolute; left: 636px; top: 5px; height: 20px; display: flex; }
    .hud2 { position: absolute; right: 9px; top: 5px; height: 20px; display: flex; gap: 6px; }
    .pane { position: absolute; right: 0; top: 51px; width: 26px; border: 1px solid #8a8a8a; border-right: 0; background: #333; }
    .pane div { height: 24px; display: flex; align-items: center; justify-content: center; border-bottom: 1px solid #8a8a8a; padding-right: 1px; }
    .pane div:last-child { border-bottom: 0; }
    .pane div:first-child { background: #b5b5b5; height: 23px; }
    .handle { position: absolute; left: 280px; top: 416px; width: 9px; height: 39px; background: #4a4a4a; border: 1px solid #858585; border-left: 0; display: flex; align-items: center; justify-content: center; z-index: 3; padding-bottom: 1px; }
    .btabs { height: 16px; display: flex; border-top: 1px solid #8a8a8a; border-bottom: 1px solid #8a8a8a; padding-left: 48px; flex: none; font-size: 12px; }
    .nav { width: 16px; background: #a3a3a5; border: 1px solid #c0c4c8; border-right-color: #777; display: flex; align-items: center; justify-content: center; }
    .btab { background: #333; border-right: 1px solid #858585; display: flex; align-items: center; justify-content: center; line-height: 12px; padding-bottom: 1px; }
    .btab.on { background: #4a4a4a; font-weight: 700; border-left: 1px solid #858585; padding-left: 5px; }
    .btab.last { padding-right: 8px; }
    .stat { flex: 1; display: flex; align-items: center; font-size: 12px; }
    .grab { margin-left: 8px; align-self: flex-end; }
    .right { width: 2px; background: linear-gradient(#1c1c1c 23px, #2b2b6c 23px 45px, #101010 45px 265px, #2c2c44 265px 715px, #101010 715px); }
    .task { height: 40px; display: flex; font-size: 12px; background: linear-gradient(90deg, #262122 0, #1e1f20 110px, #202021 340px, #291f20 465px, #1f2021 560px, #1b2732 630px, #1e2a3a 700px, #232e45 750px, #283543 810px, #3a4345 880px, #2c3c49 930px, #26384a 1150px, #1e2e3b 1250px, #1d2a38 1500px, #202225 1700px, #1a2138 1810px, #1b2136 1850px, #232323 1890px); }
    .task .cell { position: relative; }
    .task .ul::after { content: ""; position: absolute; left: 4px; right: 4px; bottom: 0; height: 2px; background: #c4bdf2; }
    .task .act { background: linear-gradient(90deg, #4f5153 0 44px, #333 44px 45px, #47494b 45px); }
    .task .act::after { left: 0; right: 0; }
    .badge { position: absolute; left: 50%; top: 50%; font-weight: 700; color: #fff; line-height: 1; }
    .x { transform: translate(-10px, -6px); font-size: 12px; }
    .w { transform: translate(-11.5px, -6px); font-size: 10px; }
    .s1 { transform: translate(-11px, -8px); font-size: 11px; line-height: 10px; }
    .s2 { transform: translate(-6px, 4px); font-size: 8px; line-height: 8px; }
    .n2 { transform: translate(0, 0); font-size: 11.5px; width: 18px; height: 18px; border: 1px solid #999; border-radius: 9px; background: #2b2b2b; text-align: center; line-height: 16px; font-weight: 400; }
    .wx { font-size: 14.5px; }
    .clock { flex-direction: column; gap: 5px; padding-right: 1px; padding-bottom: 1px; }
  `;

  firstUpdated() {
    this.renderRoot.querySelectorAll<HTMLElement>(".t").forEach((el) => {
      const want = Number(el.dataset.w);
      const n = (el.textContent ?? "").length;
      const have = el.getBoundingClientRect().width;
      el.style.letterSpacing = `${((want - have) / n).toFixed(3)}px`;
    });
  }

  private titleBar() {
    return html`<div class="title">
      ${cell(5)}
      <div class="cell l logo" style="width:138px">
        <svg width="20" height="22" viewBox="0 0 20 22"><g fill="none" stroke="#f4f4f4" stroke-width="1.800"><path d="M6.500 1.500c4.500-1 6.500 1 4 3.500-1.500 1.500-3.500 2.500-6 3M5.500 8.500C9 8 9.500 11 8 13.500c-2 3-4 4.500-7.500 5.500 2.500-3 4-6 5.500-10"/><path d="M19.500 8c-3.500-1.500-7-.5-7 1.800 0 2.200 4.500 2.400 4.500 5 0 2.400-4.500 3.600-7.500 2.600"/></g></svg>
        <span><b>${t("SOLID", 39)}</b>${t("WORKS", 43)}</span>
      </div>
      ${cell(34, t("File", 17.5), "l")}${cell(36, t("Edit", 20), "l")}${cell(41, t("View", 25), "l")}
      ${cell(45, t("Insert", 29), "l")}${cell(43, t("Tools", 27), "l")}${cell(54, t("Window", 44), "l")}
      ${cell(21, ic("pin"))}${cell(2)}<div class="vsep"></div>
      ${cell(21)}${cell(20, ic("home"))}${cell(10)}${cell(20, ic("newdoc"))}${cell(23, arrow())}
      ${cell(20, ic("open"))}${cell(24, arrow())}${cell(20, ic("save"))}${cell(24, arrow())}
      ${cell(20, ic("print"))}${cell(24, arrow())}${cell(20, ic("undo"))}${cell(24, arrow("dim"))}
      ${cell(20, ic("redo"))}${cell(20, arrow("dim"))}
      <div class="sel"><div class="a">${ic("cursor")}</div><div class="b">${arrow()}</div></div>
      ${cell(5)}${cell(20, ic("lights"))}${cell(10)}${cell(20, ic("props", "", 19))}${cell(10)}${cell(20, ic("gear", "", 17))}
      ${cell(22, arrow())}${cell(278)}<div class="cell l fname" style="width:357px">${t("Part 12.SLDPRT", 75)}</div>
      <div class="search">
        <svg class="ic" width="17" height="17" viewBox="0 0 17 17"><circle cx="8.500" cy="8.500" r="7.800" fill="#f7f7f7" stroke="#444"/><path d="M6 6.500c0-3.500 5-3.500 5 0 0 2-2.500 2-2.500 4M8.500 11.800v2" fill="none" stroke="#1e7fae" stroke-width="2"/></svg>
        ${t("Search SOLIDWORKS Help", 133.5)}
        <svg class="ic mag" width="15" height="15" viewBox="0 0 15 15"><circle cx="6" cy="5.500" r="4.500" fill="none" stroke="#888" stroke-width="1.300"/><path d="m9 9 5 5" stroke="#888" stroke-width="1.600"/></svg>${arrow()}
      </div>
      ${cell(11)}${cell(20, html`<svg width="20" height="20" viewBox="0 0 20 20" fill="none" stroke="#f4f4f4" stroke-width="1.300"><circle cx="10" cy="10" r="8.700"/><circle cx="10" cy="8" r="3.300"/><path d="M4.500 16c1-5 10-5 11 0"/></svg>`)}
      ${cell(16)}${cell(20, html`<svg width="20" height="20" viewBox="0 0 20 20" fill="none" stroke="#f4f4f4" stroke-width="1.300"><circle cx="10" cy="10" r="8.700"/><path d="M7 8c0-4 6-4 6 0 0 2-3 2-3 4.500M10 14v2" stroke-width="1.700"/></svg>`)}
      ${cell(16)}${cell(20, html`<svg width="20" height="20" viewBox="0 0 20 20"><path d="M5 14.500h10" stroke="#fff" stroke-width="2.400"/></svg>`)}
      ${cell(16)}${cell(20, html`<svg width="20" height="20" viewBox="0 0 20 20"><path d="M3 3.500h14v12H3z" fill="none" stroke="#fff" stroke-width="1.300"/><path d="M2.500 4h15" stroke="#fff" stroke-width="2.500"/></svg>`)}
      ${cell(16)}${cell(20, html`<svg width="20" height="20" viewBox="0 0 20 20"><path d="m5 5 10 10M15 5 5 15" stroke="#fff" stroke-width="2"/></svg>`)}
    </div>`;
  }

  private ribbon() {
    return html`<div class="rib">
      ${cell(4)}
      ${big(49, "bolts", [["Design", 35], ["Study", 29]], { drop: true })}<div class="rsep"></div>
      ${big(75, "interference", [["Interference", 61.7], ["Detection", 50]])}
      ${big(50, "measure", [["Measure", 43.5]])}${big(54, "markup", [["Markup", 39]])}
      ${big(58, "scale", [["Mass", 26], ["Properties", 51.5]])}${big(66, "section", [["Section", 38], ["Properties", 51.5]])}
      ${big(41, "sensor", [["Sensor", 35]])}${big(78, "perf", [["Performance", 64], ["Evaluation", 53]])}
      ${col(135.5, [["check", "Check", 31], ["geom", "Geometry Analysis", 92], ["cubeoff", "Import Diagnostics", 96, true]])}
      ${col(110, [["compare", "Body Compare", 73.5, true]])}
      <div class="rsep"></div>${cell(3.5)}
      ${col(131, [["deviation", "Deviation Analysis", 92.5], ["zebra", "Zebra Stripes", 66], ["curvature", "Curvature", 49.5]])}
      ${col(143, [["draft", "Draft Analysis", 69.5], ["undercut", "Undercut Analysis", 91.5], ["parting", "Parting Line Analysis", 104.5, true]])}
      ${col(143.5, [["symmetry", "Symmetry Check", 81.5], ["thickness", "Thickness Analysis", 93.5], ["docs", "Compare Documents", 106.5]])}
      ${big(72, "active", [["Check Active", 63.5], ["Document", 52.5]], { drop: true })}
      ${cell(2)}<div class="rsep"></div>${cell(1)}
      ${big(84, "threedx", [["3DEXPERIENCE", 74.5], ["Simulation", 54.5], ["Connector", 54]], { off: true })}
      ${big(100, "simx", [["SimulationXpress", 87.6], ["Analysis Wizard", 80]])}
      ${big(56, "flox", [["FloXpress", 48.5], ["Analysis", 41], ["Wizard", 35.5]])}
      ${big(71, "dfm", [["DFMXpress", 57], ["Analysis", 41], ["Wizard", 35.5]])}
      ${big(98, "drive", [["DriveWorksXpress", 91.5], ["Wizard", 35.5]])}
      ${big(56, "costing", [["Costing", 39.5]])}${big(109, "sustain", [["Sustainability", 69]])}
      ${big(60, "part", [["Part", 19.5], ["Reviewer", 46]])}
      <svg class="ribup" width="12" height="8" viewBox="0 0 12 8"><path d="m1.500 6.500 4.500-4.500 4.500 4.500" fill="none" stroke="#fff" stroke-width="2"/></svg>
    </div>`;
  }

  private scene() {
    return html`<svg class="scene" width="1622" height="872" viewBox="293 126 1622 872">
      <defs>
        <filter id="f1" filterUnits="userSpaceOnUse" x="-100" y="-300" width="2500" height="1700"><feGaussianBlur stdDeviation="50"></feGaussianBlur></filter>
        <filter id="f2" filterUnits="userSpaceOnUse" x="-100" y="-300" width="2500" height="1700"><feGaussianBlur stdDeviation="75"></feGaussianBlur></filter>
        <linearGradient id="floor" x1="0" y1="0" x2="0" y2="1"><stop offset="0" stop-color="#fefefe"></stop><stop offset=".8" stop-color="#fefefe"></stop><stop offset="1" stop-color="#f6f7fa"></stop></linearGradient>
      </defs>
      <rect x="293" y="126" width="1622" height="872" fill="url(#floor)"></rect>
      <path d="M-200 535 293 505 600 468 914 398 1110 332 1220 265 1300 195 1350 60 1350-200H2300V680H-200z" fill="#e2e5ee" filter="url(#f1)"></path>
      <ellipse cx="1580" cy="505" rx="270" ry="100" fill="#cfd4e1" opacity=".75" filter="url(#f2)"></ellipse>
      <path d="M1490-100H1600V420H1500z" fill="#d9dce8" opacity=".4" filter="url(#f2)"></path>
      <path d="M1740-200H2300V280L1920 300 1790 200z" fill="#f1f1f4" filter="url(#f2)"></path>
      <path d="M1880 640H2100V1200H1300L1600 1010z" fill="#f1f2f6" opacity=".8" filter="url(#f2)"></path>
      <path d="M1057.500 611h22.500l-4 9.500h-22.500z" fill="#4a4b55" stroke="#000" stroke-width="1.200"></path>
      <rect x="959.500" y="528.500" width="346" height="84" rx="11" fill="#52535f" stroke="#000" stroke-width="1.200"></rect>
      ${HOLES.map((x) => svg`<circle cx=${x} cy="570.500" r="9.700" fill="#42434d" stroke="#000" stroke-width="1.200"/><circle cx=${x} cy="570.500" r="7" fill="#dde0ea" stroke="#000" stroke-width="1.200"/>`)}
      <path d="M334 938v-20" stroke="#00c800" stroke-width="4"></path><path d="m334 910 4 9h-8z" fill="#00a000"></path>
      <path d="M336 940h20" stroke="#c80000" stroke-width="4"></path><path d="m364 940-9 4v-8z" fill="#a80000"></path>
      <circle cx="334" cy="940" r="4" fill="#0000b4"></circle><circle cx="335.500" cy="938" r="1.300" fill="#aaf"></circle>
      <text x="331.500" y="904" font-size="8.500" fill="#00d800" font-family="Liberation Sans, sans-serif">Y</text>
      <text x="367.500" y="940" font-size="8.500" fill="#e03030" font-family="Liberation Sans, sans-serif">X</text>
    </svg>`;
  }

  private body() {
    const d = () => arrow("dim");
    return html`<div class="body">
      <div class="tabs">${TABS.map(([s, w, tw]) => html`<div class="tab ${s === "Evaluate" ? "on" : ""}" style="width:${w}px">${t(s, tw)}</div>`)}</div>
      <div class="side"><div class="grip"></div>
        ${SIDE.map((s) => s === "|" ? html`<div class="sline"></div>` : html`<div class="srow">${ic(s, /^g\d/.test(s) ? "halo dim" : "halo")}${s === "g7" ? d() : nothing}</div>`)}
        <div class="sfull"></div>
      </div>
      <div class="mgr">
        <div class="split"></div><div class="dotrow"><i class="dot"></i></div>
        <div class="mtabs">
          <div class="mtab on">${ic("part", "halo")}</div><div class="mtab">${ic("list")}</div><div class="mtab">${ic("tree")}</div>
          <div class="mtab">${ic("target")}</div><div class="mtab">${ic("ball")}</div>
          <div class="more"><svg width="8" height="12" viewBox="0 0 8 12"><path d="m1.500 1.500 4.500 4.500-4.500 4.500" fill="none" stroke="#111" stroke-width="2.200"/></svg></div>
        </div>
        <div class="ftree">
          <div class="filt">${ic("filter")}</div>
          <div class="root">${ic("part", "halo")}${t("Part 12  (Default<<Default>_Display Sta", 205)}</div>
          ${TREE.map(([i, s, w, e], k) => html`<div class="trow ${k ? "" : "first"}"><span class="tw">${e ? html`<i></i>` : nothing}</span>${ic(i, OUTLINED.includes(i) ? "halo" : "", 19)}${t(s, w)}</div>`)}
          <div class="roll"></div>
          <div class="sb"><span class="g"><svg width="7" height="10" viewBox="0 0 7 10"><path d="M5.500 1 1.500 5l4 4" fill="none" stroke="#444" stroke-width="2"/></svg></span><span class="th"></span><span class="g r"><svg width="7" height="10" viewBox="0 0 7 10"><path d="m1.500 1 4 4-4 4" fill="none" stroke="#444" stroke-width="2"/></svg></span></div>
        </div>
        <div class="mline"></div>
      </div>
      <div class="handle"><i class="dot"></i></div>
      <div class="view">${this.scene()}
        <div class="hud">
          ${cell(20, ic("zoomfit", "", 19))}${cell(5)}${cell(20, ic("zoomarea", "", 19))}${cell(6)}${cell(20, ic("prev", "", 19))}${cell(6)}${cell(20, ic("sect", "", 19))}${cell(5)}${cell(20, ic("dyn", "", 19))}${cell(6)}
          ${cell(20, ic("orient", "", 19))}${cell(19, d())}${cell(2)}${cell(20, ic("display", "", 19))}${cell(18, d())}${cell(2)}${cell(20, ic("eye"))}${cell(18, d())}${cell(2)}
          ${cell(20, ic("appear"))}${cell(6)}${cell(20, ic("scene"))}${cell(18, d())}${cell(2)}${cell(20, ic("monitor"))}${cell(18, d())}
        </div>
        <div class="hud2">${["dockl", "dockr", "vmin", "restore", "vclose"].map((n) => ic(n))}</div>
        <div class="pane">${["compass", "home", "books", "folderopen", "palette", "ball", "list"].map((n) => html`<div>${ic(n, "", n === "compass" ? 20 : 18)}</div>`)}</div>
      </div>
    </div>`;
  }

  private bottom() {
    const nav = ["M3 1v8M9 1 5 5l4 4z", "m8 1-5 4 5 4z", "m3 1 5 4-5 4z", "M8 1v8M2 1l4 4-4 4z"];
    return html`<div class="btabs">
        ${nav.map((p) => html`<div class="nav"><svg width="11" height="10" viewBox="0 0 11 10"><path d=${p} fill="#8a8a8c" stroke="#828286"/></svg></div>`)}
        <div class="btab on" style="width:59px">${t("Model", 34.5)}</div><div class="btab" style="width:68px">${t("3D Views", 47)}</div>
        <div class="btab last" style="width:108px">${t("Motion Study 1", 80)}</div>
      </div>
      <div class="stat">${cell(1)}${cell(1599, t("SOLIDWORKS Premium 2021 SP3.0", 182), "l")}${cell(179, t("Editing Part", 60.5), "l")}${cell(53, t("MMGS", 36), "l")}
        ${cell(8, arrow("up"))}${cell(23)}${cell(24, ic("tag", "halo", 16))}
        <svg class="ic grab" width="10" height="12" viewBox="0 0 10 12"><path d="M6 1h2v2H6zM3 5h2v2H3zM6 5h2v2H6zM0 9h2v2H0zM3 9h2v2H3zM6 9h2v2H6z" fill="#c8c8c8"/></svg>
      </div>`;
  }

  private taskbar() {
    return html`<div class="task">
      ${cell(48, tk("win"))}${cell(48, tk("search"))}${cell(48, tk("ring"))}${cell(48, tk("view"))}${cell(3)}
      ${cell(48, tk("explorer"), "ul")}${cell(49, tk("chrome"))}${cell(1)}
      ${cell(48, html`${tk("sw")}<span class="badge s1">${t("SW", 21)}</span><span class="badge s2">${t("2021", 18)}</span>`, "ul act")}${cell(1)}
      ${cell(48, tk("teal"))}${cell(1)}${cell(48, html`${tk("excel")}<span class="badge x">X</span>`)}${cell(1)}
      ${cell(48, tk("edge"))}${cell(1)}${cell(48, tk("brave"))}${cell(1)}${cell(48, html`${tk("word")}<span class="badge w">W</span>`, "ul")}
      ${cell(944)}${cell(24, tk("sun"))}${cell(8)}
      ${cell(39, t("28°C", 29), "l wx")}${cell(40, t("Haze", 30), "l wx")}
      ${cell(24, tk("chev"))}${cell(24, tk("meet"))}${cell(24, tk("globe"))}${cell(24, tk("battery"))}${cell(24, tk("volume"))}
      ${cell(6)}${cell(24, t("ENG", 23), "l")}${cell(5)}
      ${cell(72, html`${t("13:33", 26.5)}${t("09-11-2022", 58)}`, "clock")}${cell(2)}
      ${cell(36, html`${tk("notif")}<span class="badge n2">2</span>`)}
    </div>`;
  }

  render() {
    return html`
      <svg class="defs" width="0" height="0"><defs>
        <linearGradient id="rb" x1="1" y1="0" x2="0" y2="1"><stop offset="0" stop-color="#ff0"></stop><stop offset=".18" stop-color="#3f3"></stop><stop offset=".38" stop-color="#0df"></stop><stop offset=".58" stop-color="#30f"></stop><stop offset=".75" stop-color="#f0f"></stop><stop offset="1" stop-color="#700"></stop></linearGradient>
      </defs></svg>
      <div class="desk">
        <div class="behind"><div class="b0"><i></i></div><div class="b1"></div><div class="b2">F</div><div class="b3"></div><div class="b4"></div><div class="b5"></div><div class="b6"></div></div>
        <div class="win"><div class="topline"></div>${this.titleBar()}${this.ribbon()}${this.body()}${this.bottom()}</div>
        <div class="right"></div>
      </div>
      ${this.taskbar()}`;
  }
}
